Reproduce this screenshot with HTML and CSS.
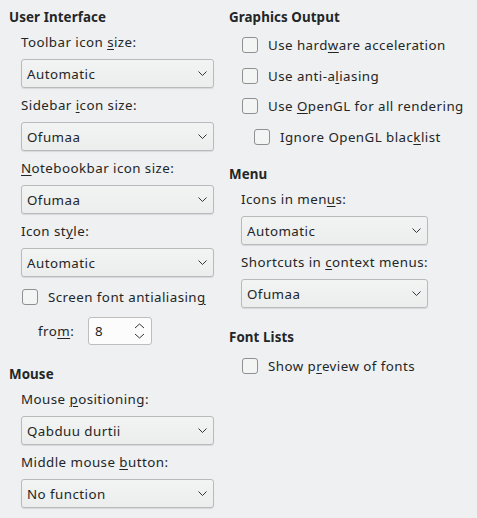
FILE: index.html
```html
<!DOCTYPE html>
<html>
<head>
<meta charset="utf-8">
<link rel="stylesheet" href="styles.css">
</head>
<body>
<div class="page">
  <div class="col col-left">
    <div class="heading">User Interface</div>
    <div class="group">
      <div class="label">Toolbar icon <u>s</u>ize:</div>
      <div class="combo"><span>Automatic</span><svg class="chev" width="9" height="6" viewBox="0 0 9 6"><polyline points="0.5,0.5 4.5,4.5 8.5,0.5"/></svg></div>
      <div class="label">Sidebar <u>i</u>con size:</div>
      <div class="combo"><span>Ofumaa</span><svg class="chev" width="9" height="6" viewBox="0 0 9 6"><polyline points="0.5,0.5 4.5,4.5 8.5,0.5"/></svg></div>
      <div class="label"><u>N</u>otebookbar icon size:</div>
      <div class="combo"><span>Ofumaa</span><svg class="chev" width="9" height="6" viewBox="0 0 9 6"><polyline points="0.5,0.5 4.5,4.5 8.5,0.5"/></svg></div>
      <div class="label">Icon st<u>y</u>le:</div>
      <div class="combo"><span>Automatic</span><svg class="chev" width="9" height="6" viewBox="0 0 9 6"><polyline points="0.5,0.5 4.5,4.5 8.5,0.5"/></svg></div>
      <div class="check first-check"><span class="box"></span><span>Screen font antialiasin<u>g</u></span></div>
      <div class="spinrow">
        <span class="spinlabel">fro<u>m</u>:</span>
        <div class="spin"><span>8</span>
          <svg class="arrows" width="11" height="16" viewBox="0 0 11 16"><polyline points="1,5 5.5,1 10,5"/><polyline points="1,11 5.5,15 10,11"/></svg>
        </div>
      </div>
    </div>
    <div class="heading heading-mouse">Mouse</div>
    <div class="group">
      <div class="label">Mouse <u>p</u>ositioning:</div>
      <div class="combo"><span>Qabduu durtii</span><svg class="chev" width="9" height="6" viewBox="0 0 9 6"><polyline points="0.5,0.5 4.5,4.5 8.5,0.5"/></svg></div>
      <div class="label">Middle mouse <u>b</u>utton:</div>
      <div class="combo"><span>No function</span><svg class="chev" width="9" height="6" viewBox="0 0 9 6"><polyline points="0.5,0.5 4.5,4.5 8.5,0.5"/></svg></div>
    </div>
  </div>
  <div class="col col-right">
    <div class="heading">Graphics Output</div>
    <div class="group checks">
      <div class="check"><span class="box"></span><span>Use hard<u>w</u>are acceleration</span></div>
      <div class="check"><span class="box"></span><span>Use anti-a<u>l</u>iasing</span></div>
      <div class="check"><span class="box"></span><span>Use <u>O</u>penGL for all rendering</span></div>
      <div class="check sub"><span class="box"></span><span>Ignore OpenGL blac<u>k</u>list</span></div>
    </div>
    <div class="heading heading-menu">Menu</div>
    <div class="group">
      <div class="label">Icons in men<u>u</u>s:</div>
      <div class="combo narrow"><span>Automatic</span><svg class="chev" width="9" height="6" viewBox="0 0 9 6"><polyline points="0.5,0.5 4.5,4.5 8.5,0.5"/></svg></div>
      <div class="label">Shortcuts in <u>c</u>ontext menus:</div>
      <div class="combo narrow"><span>Ofumaa</span><svg class="chev" width="9" height="6" viewBox="0 0 9 6"><polyline points="0.5,0.5 4.5,4.5 8.5,0.5"/></svg></div>
    </div>
    <div class="heading heading-fonts">Font Lists</div>
    <div class="group">
      <div class="check fonts-check"><span class="box"></span><span>Show p<u>r</u>eview of fonts</span></div>
    </div>
  </div>
</div>
</body>
</html>
```

FILE: styles.css
```css
html, body {
  margin: 0;
  padding: 0;
  background: #eff0f1;
}
body {
  font-family: "Noto Sans", sans-serif;
  font-size: 13.33px;
  color: #232627;
  line-height: 18px;
  width: 477px;
  height: 518px;
  overflow: hidden;
}
u {
  text-decoration: underline;
  text-underline-offset: 2px;
  text-decoration-thickness: 1px;
}
.page {
  display: flex;
  padding-top: 8px;
}
.col {
  display: flex;
  flex-direction: column;
}
.col-left {
  width: 211px;
  padding-left: 9px;
}
.col-right {
  padding-left: 9px;
}
.heading {
  font-weight: bold;
  height: 18px;
  letter-spacing: 0.1px;
}
.heading-mouse { margin-top: 20px; }
.heading-menu { margin-top: 16.5px; }
.heading-fonts { margin-top: 19px; }
.group {
  display: flex;
  flex-direction: column;
  padding-left: 12px;
  letter-spacing: 0.45px;
}
.label {
  margin-top: 7px;
  height: 18px;
  white-space: nowrap;
}
.combo {
  margin-top: 8px;
  box-sizing: border-box;
  width: 193px;
  height: 29px;
  margin-bottom: 1px;
  border: 1px solid #b8babc;
  border-radius: 3px;
  background: linear-gradient(#f2f3f3, #eceded);
  box-shadow: 0 1px 1px rgba(0,0,0,0.10);
  display: flex;
  align-items: center;
  justify-content: space-between;
  padding: 0 6px 0 5px;
}
.combo.narrow { width: 187px; }
.chev polyline, .arrows polyline {
  fill: none;
  stroke: #31363b;
  stroke-width: 1;
}
.check {
  display: flex;
  align-items: center;
  height: 24px;
  gap: 10px;
  white-space: nowrap;
}
.first-check { margin-top: 7px; padding-left: 1px; }
.checks {
  margin-top: 7px;
  gap: 6.5px;
  padding-left: 13px;
}
.fonts-check { margin-top: 8px; padding-left: 1px; }
.check.sub { padding-left: 12px; }
.box {
  box-sizing: border-box;
  width: 16px;
  height: 16px;
  border: 1px solid #8e9092;
  border-radius: 3px;
  background: #f3f4f4;
  flex: none;
}
.spinrow {
  margin-top: 8px;
  display: flex;
  align-items: center;
  padding-left: 17px;
}
.spinlabel {
  width: 50px;
}
.spin {
  box-sizing: border-box;
  width: 64px;
  height: 28px;
  background: #fcfcfc;
  border: 1px solid #bcbebf;
  border-radius: 3px;
  display: flex;
  align-items: center;
  justify-content: space-between;
  padding: 0 6px 0 6px;
}
```
